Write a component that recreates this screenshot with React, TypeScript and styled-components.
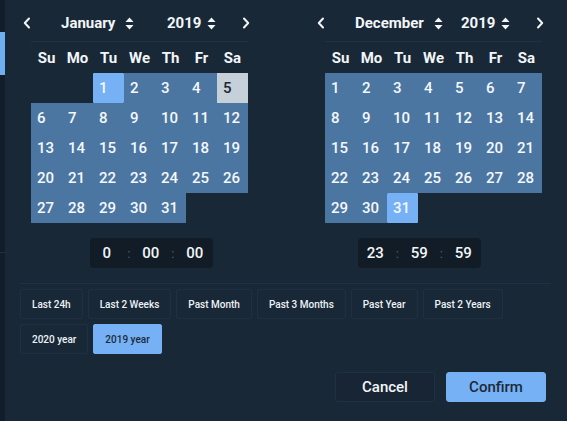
import styled, {createGlobalStyle} from 'styled-components';

const GlobalStyle = createGlobalStyle`
  html, body {
    margin: 0;
    padding: 0;
    background: #182837;
  }

  body {
    font-family: Roboto, "Liberation Sans", sans-serif;
    color: #f1f4f7;
  }
`;

const Page = styled.div`
  display: flex;
  width: 567px;
  height: 421px;
  overflow: hidden;
`;

const Sidebar = styled.aside`
  display: flex;
  flex-direction: column;
  width: 5px;
  flex-shrink: 0;
  background: #111e29;

  > .active {
    margin-top: 32px;
    height: 43px;
    background: #6eaef1;
  }

  > .rule {
    margin-top: 177px;
    height: 1px;
    background: #1d3043;
  }
`;

const Panel = styled.main`
  flex: 1;
  display: flex;
  flex-direction: column;
  padding: 0 16px 0 15px;
  background: #182837;
`;

const Calendars = styled.div`
  display: flex;
  gap: 6px;
`;

const Column = styled.section<{ $align: 'start' | 'end' }>`
  flex: 1;
  display: flex;
  flex-direction: column;
  align-items: center;

  > .calendar {
    align-self: ${p => (p.$align === 'start' ? 'flex-start' : 'flex-end')};
    margin-left: ${p => (p.$align === 'start' ? '11px' : '0')};
    margin-right: ${p => (p.$align === 'end' ? '9px' : '0')};
  }
`;

const Calendar = styled.div`
  width: 217px;
`;

const Header = styled.div`
  display: flex;
  align-items: center;
  height: 36px;
  margin-top: 5px;
  border-bottom: 1px solid #1f3142;
`;

const NavButton = styled.button<{ $side: 'prev' | 'next' }>`
  display: flex;
  align-items: center;
  justify-content: center;
  width: 18px;
  height: 24px;
  padding: 0;
  border: none;
  background: none;
  color: #f1f4f7;
  margin-left: ${p => (p.$side === 'prev' ? '-13px' : 'auto')};
  margin-right: ${p => (p.$side === 'next' ? '-7px' : '0')};
`;

const Select = styled.div<{ $width?: number; $gap: number }>`
  display: flex;
  align-items: center;
  gap: ${p => p.$gap}px;
  width: ${p => (p.$width ? `${p.$width}px` : 'auto')};
  font-size: 15px;
  font-weight: 700;
  color: #f3f6f9;
  white-space: nowrap;

  &.month {
    margin-left: 25px;
  }
`;

const Grid = styled.div`
  display: grid;
  grid-template-columns: repeat(7, 31px);
  grid-auto-rows: 30px;
  margin-top: 1px;
`;

const WeekDay = styled.div`
  display: flex;
  align-items: center;
  justify-content: center;
  font-size: 15px;
  font-weight: 700;
  color: #f3f6f9;
`;

type Tone = 'empty' | 'range' | 'edge' | 'muted';

const tones: Record<Tone, { bg: string; fg: string }> = {
  empty: {bg: 'transparent', fg: 'transparent'},
  range: {bg: '#4c76a2', fg: '#f5f8fb'},
  edge: {bg: '#75b1f4', fg: '#f5f8fb'},
  muted: {bg: '#c6d0d8', fg: '#1c2733'},
};

const Day = styled.div<{ $tone: Tone }>`
  display: flex;
  align-items: center;
  padding-left: 6px;
  font-size: 15px;
  font-weight: 500;
  background: ${p => tones[p.$tone].bg};
  color: ${p => tones[p.$tone].fg};
  border-radius: ${p => (p.$tone === 'edge' ? '1px' : '0')};
`;

const TimeBox = styled.div`
  display: flex;
  align-items: center;
  height: 30px;
  margin-top: 15px;
  padding: 0 1px 0 0;
  background: #111c27;
  border-radius: 4px;

  > span {
    width: 34px;
    text-align: center;
    font-size: 15px;
    font-weight: 500;
    color: #f3f6f9;
  }

  > i {
    width: 10px;
    text-align: center;
    font-style: normal;
    font-size: 13px;
    color: #4f5e6c;
  }
`;

const Divider = styled.hr`
  margin: 15px 0 0 0;
  border: none;
  border-top: 1px solid #1f3142;
`;

const Presets = styled.div`
  display: flex;
  flex-wrap: wrap;
  gap: 5px 5px;
  margin-top: 5px;
`;

const Preset = styled.button<{ $active?: boolean }>`
  height: 30px;
  padding: 0 11px;
  border: 1px solid ${p => (p.$active ? '#75b1f4' : '#1e3144')};
  border-radius: 2px;
  background: ${p => (p.$active ? '#75b1f4' : 'transparent')};
  color: ${p => (p.$active ? '#1c2a39' : '#eef2f6')};
  font-family: Roboto, "Liberation Sans", sans-serif;
  font-size: 10px;
  font-weight: 500;
`;

const Actions = styled.div`
  display: flex;
  justify-content: flex-end;
  gap: 11px;
  margin-top: 18px;
  margin-right: 5px;
`;

const ActionButton = styled.button<{ $primary?: boolean }>`
  width: 100px;
  height: 30px;
  border: 1px solid ${p => (p.$primary ? '#75b1f4' : '#1e3144')};
  border-radius: 3px;
  background: ${p => (p.$primary ? '#75b1f4' : '#172534')};
  color: ${p => (p.$primary ? '#1c2a39' : '#f3f6f9')};
  font-family: Roboto, "Liberation Sans", sans-serif;
  font-size: 15px;
  font-weight: 500;
`;

function Chevron({dir}: { dir: 'left' | 'right' }) {
  return (
    <svg width="8" height="12" viewBox="0 0 8 12">
      <path
        d={dir === 'left' ? 'M6 1.5L1.8 6L6 10.5' : 'M2 1.5L6.2 6L2 10.5'}
        fill="none"
        stroke="currentColor"
        strokeWidth="2"
        strokeLinecap="round"
        strokeLinejoin="round"
      />
    </svg>
  );
}

function SortIcon() {
  return (
    <svg width="9" height="13" viewBox="0 0 9 13">
      <path d="M4.5 0.5L8.5 5H0.5Z" fill="currentColor"/>
      <path d="M4.5 12.5L8.5 8H0.5Z" fill="currentColor"/>
    </svg>
  );
}

const weekDays = ['Su', 'Mo', 'Tu', 'We', 'Th', 'Fr', 'Sa'];

type Month = {
  name: string;
  year: number;
  offset: number;
  days: number;
  tone: (day: number) => Tone;
  time: [string, string, string];
  align: 'start' | 'end';
};

const months: Month[] = [
  {
    name: 'January', year: 2019, offset: 2, days: 31, align: 'start',
    tone: d => (d === 1 ? 'edge' : d === 5 ? 'muted' : 'range'),
    time: ['0', '00', '00'],
  },
  {
    name: 'December', year: 2019, offset: 0, days: 31, align: 'end',
    tone: d => (d === 31 ? 'edge' : 'range'),
    time: ['23', '59', '59'],
  },
];

const presets = [
  'Last 24h', 'Last 2 Weeks', 'Past Month', 'Past 3 Months', 'Past Year', 'Past 2 Years',
  '2020 year', '2019 year',
];

function MonthView({month}: { month: Month }) {
  const cells: { key: string; day?: number }[] = [];
  for (let i = 0; i < month.offset; i++) cells.push({key: `e${i}`});
  for (let d = 1; d <= month.days; d++) cells.push({key: `d${d}`, day: d});

  return (
    <Column $align={month.align}>
      <Calendar className="calendar">
        <Header>
          <NavButton $side="prev"><Chevron dir="left"/></NavButton>
          <Select className="month" $width={106} $gap={10}>{month.name}<SortIcon/></Select>
          <Select $gap={6}>{month.year}<SortIcon/></Select>
          <NavButton $side="next"><Chevron dir="right"/></NavButton>
        </Header>
        <Grid>
          {weekDays.map(w => <WeekDay key={w}>{w}</WeekDay>)}
          {cells.map(c => (
            <Day key={c.key} $tone={c.day ? month.tone(c.day) : 'empty'}>{c.day}</Day>
          ))}
        </Grid>
      </Calendar>
      <TimeBox>
        <span>{month.time[0]}</span>
        <i>:</i>
        <span>{month.time[1]}</span>
        <i>:</i>
        <span>{month.time[2]}</span>
      </TimeBox>
    </Column>
  );
}

export default function App() {
  return (
    <Page>
      <GlobalStyle/>
      <Sidebar>
        <div className="active"/>
        <div className="rule"/>
      </Sidebar>
      <Panel>
        <Calendars>
          {months.map(m => <MonthView key={m.name} month={m}/>)}
        </Calendars>
        <Divider/>
        <Presets>
          {presets.map(p => <Preset key={p} $active={p === '2019 year'}>{p}</Preset>)}
        </Presets>
        <Actions>
          <ActionButton>Cancel</ActionButton>
          <ActionButton $primary>Confirm</ActionButton>
        </Actions>
      </Panel>
    </Page>
  );
}
